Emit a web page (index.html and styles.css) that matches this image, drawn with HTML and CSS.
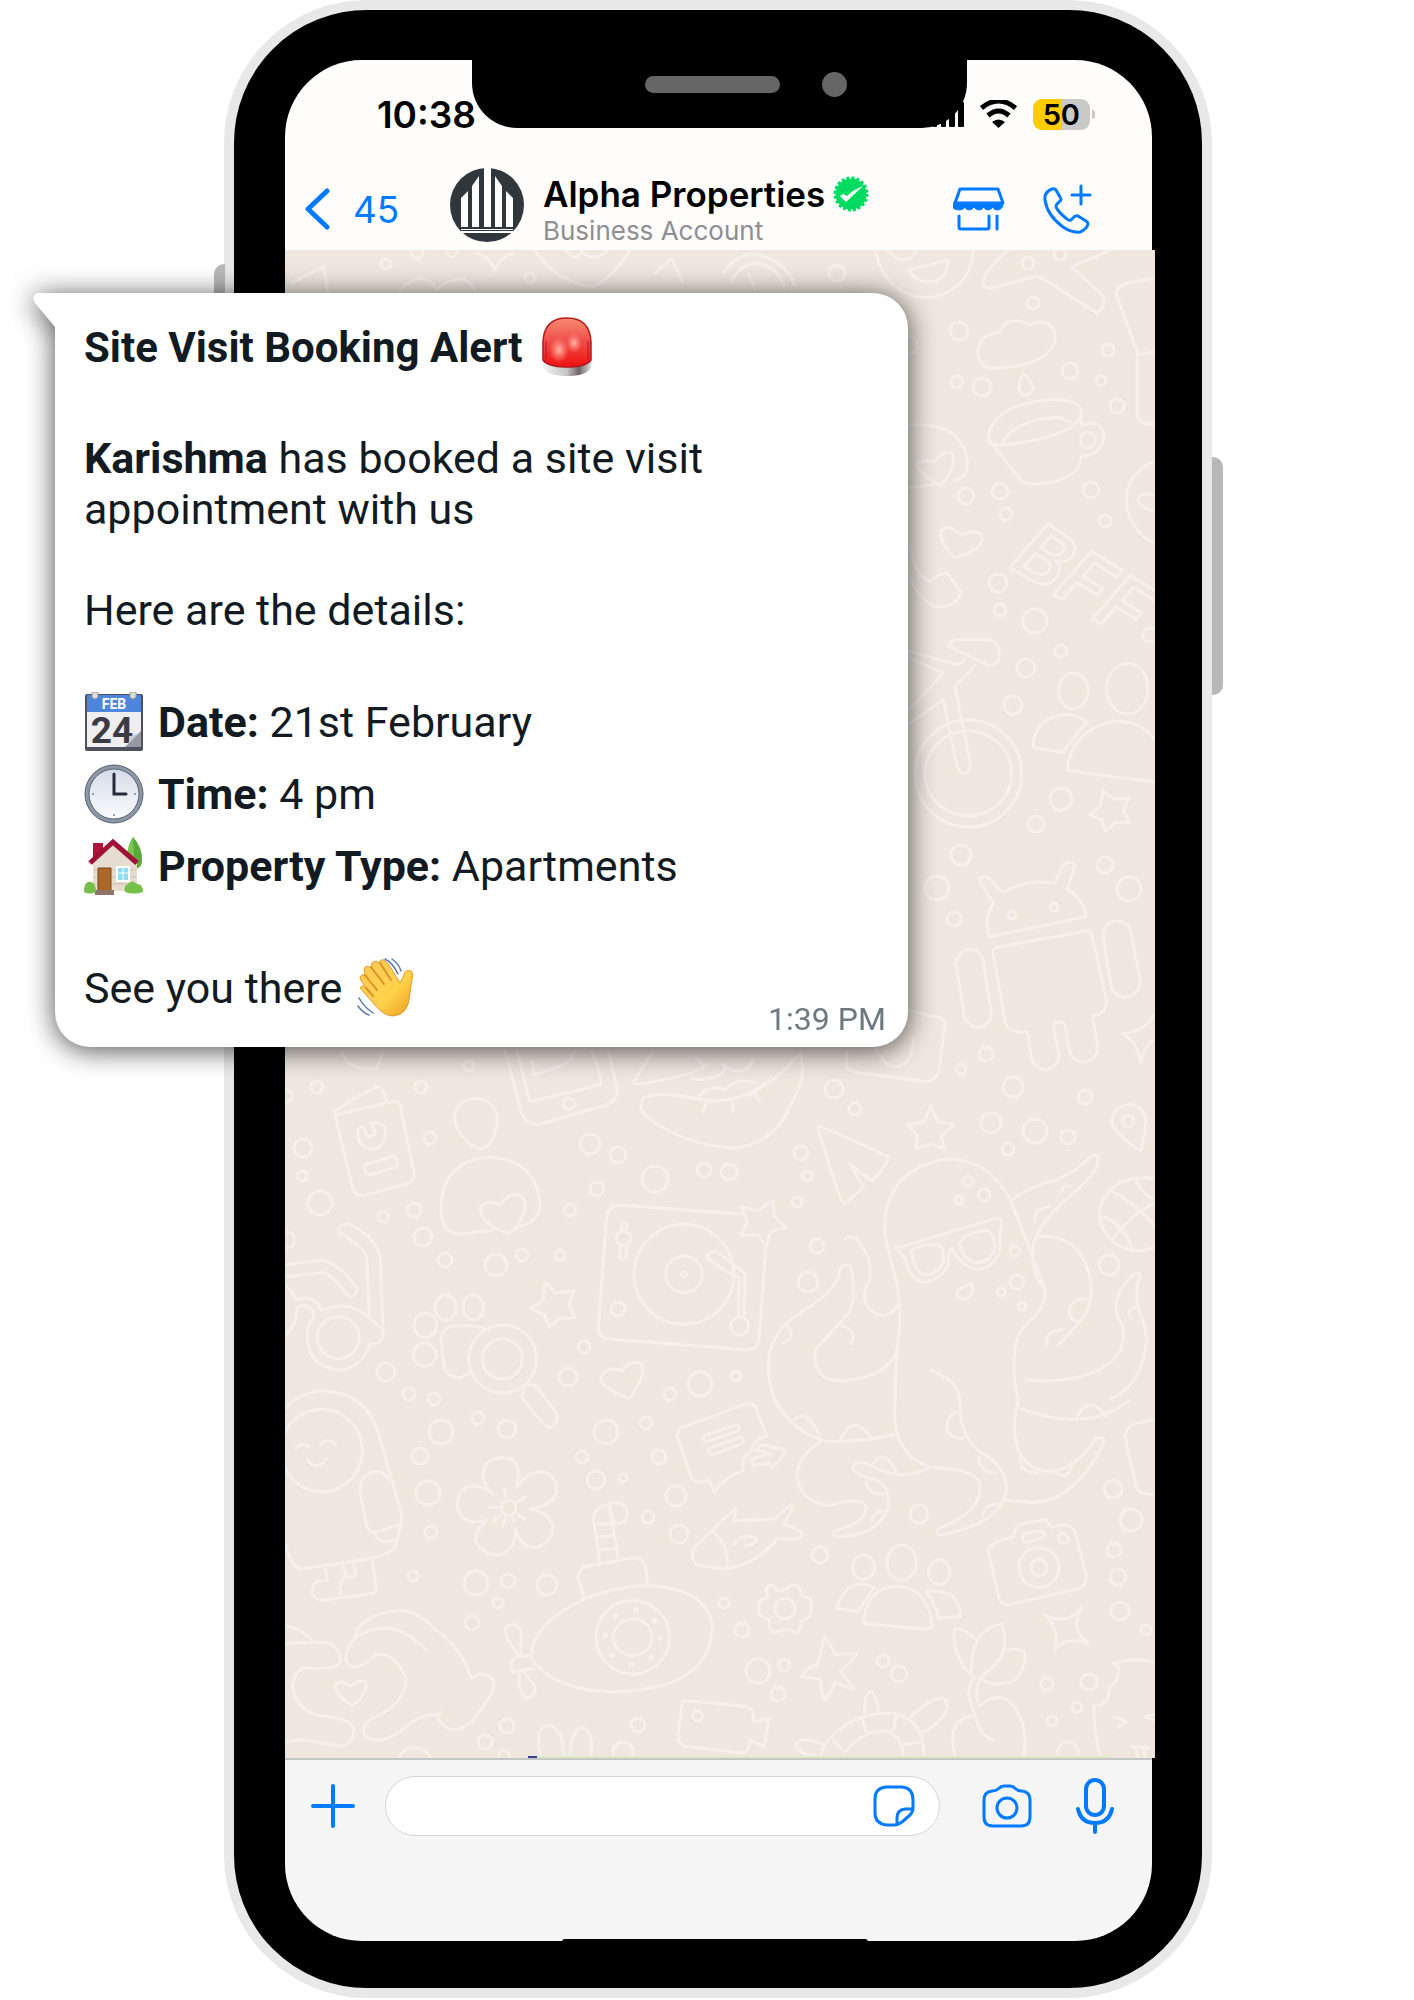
FILE: index.html
```html
<!DOCTYPE html>
<html lang="en">
<head>
    <meta charset="UTF-8">
    <meta name="viewport" content="width=device-width, initial-scale=1.0">
    <title>Site Visit Booking Alert</title>
    <link rel="stylesheet" href="styles.css">
</head>
<body>

    <div class="stage">
        <div class="phone">
            <span class="side-button side-left"></span>
            <span class="side-button side-right"></span>

            <div class="notch">
                <span class="speaker"></span>
                <span class="lens"></span>
            </div>

            <header class="top">
                <div class="status">
                    <span class="clock">10:38</span>
                    <div class="status-icons">
                        <svg width="32" height="28" viewBox="0 0 32 28"><path d="M2 21h2v5H2zM10 16h3v10h-3zM18 10h4v16h-4zM27 3h4v23h-4z" stroke="#000" stroke-width="2" stroke-linejoin="round"/></svg>
                        <svg class="wifi" width="37" height="28" viewBox="0 0 37 28"><path d="M1.500 8Q18.500-6 35.500 8M8 15.500Q18.500 6.500 29 15.500" fill="none" stroke="#000" stroke-width="5"/><path d="M12 22Q18.500 17 25 22L18.500 28z"/></svg>
                        <span class="battery">50</span>
                    </div>
                </div>
                <nav class="nav">
                    <a class="back" href="#">
                        <svg width="25" height="42" viewBox="0 0 25 42"><path d="M22 3L3 21l19 18" fill="none" stroke="#007aff" stroke-width="5" stroke-linecap="round" stroke-linejoin="round"/></svg>
                        45
                    </a>
                    <svg class="avatar" viewBox="0 0 74 74">
                        <circle cx="37" cy="37" r="37" fill="#30363a"/>
                        <path fill="#fff" d="M34 0h7v59h-7zM22 18l7-10v51h-7zM45 8l7 10v41h-7zM11 30l7-7v36h-7zM56 23l7 7v29h-7zM11 61h52v1H11zM11 63h52v2H11z"/>
                    </svg>
                    <div class="contact">
                        <div class="contact-name">Alpha Properties
                            <svg width="36" height="36" viewBox="0 0 36 36"><circle cx="18" cy="18" r="15.500" fill="#00dc61"/><circle cx="18" cy="18" r="16" fill="none" stroke="#00dc61" stroke-width="3" stroke-dasharray="2.900 2.126"/><path d="M7 20l6 6L30 10Q20 14 14 20l-4-2z" fill="#fff"/></svg>
                        </div>
                        <div class="contact-type">Business Account</div>
                    </div>
                    <div class="nav-actions">
                        <button type="button" aria-label="Catalogue">
                            <svg width="52" height="44" viewBox="0 0 52 44" fill="none" stroke="#007aff" stroke-width="3" stroke-linejoin="round" stroke-linecap="round"><path d="M7 2h38l5 14H2z"/><path d="M2 16h48q0 7-6 7-3 0-4-3-2 3-5 3t-4-3q-2 3-5 3t-5-3q-2 3-5 3t-4-3q-2 3-5 3-9 0-9-7z" fill="#007aff" stroke-width="1"/><path d="M6 29v11q0 2 2 2h26q2 0 2-2V29M44 29v13"/></svg>
                        </button>
                        <button type="button" aria-label="Call">
                            <svg width="49" height="50" viewBox="0 0 49 50" fill="none" stroke="#007aff" stroke-width="3" stroke-linejoin="round" stroke-linecap="round"><path d="M9 5Q1 8 2 16q2 15 18 27 9 6 17 5 7-3 8-8 0-2-2-3l-8-5q-3-1-5 2l-2 2q-2 1-4-1Q16 29 13 23q0-2 1-3l3-3q2-1 0-4l-4-7q-1-2-4-1zM38 2v18M29 11h18"/></svg>
                        </button>
                    </div>
                </nav>
            </header>

            <main class="chat">
                <svg class="doodles" viewBox="285 250 870 1508" preserveAspectRatio="xMinYMin slice" aria-hidden="true">
                    <g id="rings"></g>

                    <!-- top edge -->
                    <g transform="translate(200 0) scale(.3333)">
                        <path d="M270 850L370 800L385 880M595 880Q620 840 660 835Q700 840 710 870Q740 835 790 837Q820 850 830 880M825 760Q870 765 885 815Q900 765 945 760M1005 750Q1070 850 1180 860Q1240 830 1290 750M1095 750Q1130 790 1145 755Q1180 790 1225 750M1360 825L1415 775L1450 850"/>
                    </g>
                    <g transform="translate(720 0) scale(.3333)">
                        <path d="M465 750Q500 890 620 893Q750 880 760 750M565 810L685 780Q680 850 620 845Q580 840 565 810M500 750Q560 810 590 750M10 820Q50 760 105 762Q200 780 225 860M30 850Q60 790 110 790Q180 800 195 870M85 820L105 870"/>
                    </g>

                    <!-- plane, cloud, cup, bicycle, friends -->
                    <g transform="translate(900 240) scale(.3333 .4464)">
                        <path d="M330 20Q245 70 250 100Q260 110 280 107L415 80Q500 120 590 163Q620 150 610 125L515 60L640 20M765 85L680 97Q645 105 650 125L715 257L765 250M712 257V390Q715 415 765 412"/>
                        <path d="M298 208Q235 210 233 255Q240 290 290 287Q460 280 467 215Q450 170 388 190Q320 165 298 208ZM370 298Q405 325 400 335Q385 350 370 347Q345 335 370 298Z"/>
                        <path d="M265 440Q280 365 470 357Q540 360 545 385Q540 440 300 460L275 455Q262 450 265 440ZM275 455L365 540Q390 550 440 545Q540 530 540 495L545 485Q610 480 612 435Q600 400 545 415L543 385M305 455Q350 400 480 397L515 410"/>
                        <ellipse cx="563" cy="448" rx="22" ry="18"/>
                        <path d="M25 415Q190 405 203 500Q200 535 160 538M25 555L100 548M120 550Q50 520 52 500Q70 490 100 498Q150 460 160 485Q165 520 120 550ZM165 712Q120 680 122 655Q140 630 185 662Q240 640 247 672Q240 695 165 712ZM30 680Q40 750 90 765Q130 740 145 750L185 790Q160 825 110 822Q60 810 25 750"/>
                        <path d="M765 495Q680 520 680 585Q685 650 765 680M765 570Q720 565 712 580Q720 600 765 608"/>
                        <path d="M25 920L165 950Q190 950 195 938M145 910Q150 895 180 895L270 895Q300 905 298 930Q295 955 265 953L145 910M230 950L165 1000L212 1175Q205 1195 190 1195Q175 1190 170 1175L130 1030L25 1085M25 935L130 970L25 1055"/>
                        <ellipse cx="205" cy="1195" rx="160" ry="120"/>
                        <ellipse cx="205" cy="1195" rx="130" ry="95"/>
                        <ellipse cx="520" cy="1010" rx="45" ry="40"/>
                        <ellipse cx="682" cy="1005" rx="62" ry="57"/>
                        <path d="M398 1130Q410 1065 510 1062L562 1078L487 1148L405 1138ZM765 1120Q720 1075 640 1078Q510 1100 503 1188L640 1203L765 1213"/>
                        <path d="M610 1235L640 1252L687 1250L670 1277L688 1305L645 1305L617 1325L605 1298L568 1288L600 1270Z"/>
                    </g>
                    <text class="bff" transform="translate(1008 566) rotate(32)">BFF</text>

                    <!-- robot, octopus -->
                    <g transform="translate(560 850) scale(.421 .3333)">
                        <path d="M1020 260L1250 200Q1245 150 1205 118L1222 50Q1215 25 1195 45L1175 100Q1110 85 1052 128L1020 85Q1000 70 997 95L1030 160Q1005 200 1020 260Z"/>
                        <path d="M1028 305Q1030 292 1045 290L1255 242Q1263 250 1265 265L1298 450Q1300 490 1265 498L1278 600Q1270 635 1240 637Q1215 630 1210 600L1198 520Q1185 510 1172 525L1186 620Q1180 655 1150 660Q1128 655 1120 625L1110 545Q1065 550 1058 520Z"/>
                        <path d="M940 340Q945 300 975 298Q1000 305 1005 330L1025 490Q1022 530 990 533Q965 528 960 495ZM1290 260Q1292 215 1320 212Q1350 215 1356 245L1378 390Q1375 440 1340 442Q1310 435 1308 400Z"/>
                        <path d="M680 600L680 650Q690 668 710 668L870 695Q895 690 900 660L915 520Q910 500 880 498L825 480M750 595Q770 650 800 650Q840 640 840 560"/>
                        <path d="M880 768L897 815L935 825L905 860L915 897L880 882L845 895L848 855L827 825L865 815ZM1380 903Q1390 850 1392 810Q1385 765 1350 763Q1315 770 1310 815Q1315 850 1380 903ZM612 830Q620 825 780 920Q785 935 740 993Q720 975 688 940Q700 970 722 1012L675 1062Q665 1060 612 830Z"/>
                        <path d="M1410 490Q1400 540 1335 552Q1370 570 1380 640Q1385 590 1410 570"/>
                        <path d="M800 1500Q815 1400 800 1300L772 1160Q765 1060 810 990Q870 925 935 928Q1020 935 1070 1050Q1110 1180 1150 1310Q1160 1370 1110 1420Q1085 1450 1080 1500"/>
                        <path d="M798 1195L1040 1103Q1055 1110 1045 1145L1045 1200Q1030 1260 985 1257Q950 1245 930 1195Q922 1200 922 1245Q905 1290 865 1298Q830 1290 820 1225ZM835 1200Q860 1180 900 1185Q915 1200 910 1240Q895 1275 865 1275Q838 1260 835 1200ZM950 1180Q960 1145 1015 1142Q1035 1150 1032 1200Q1020 1240 985 1238Q955 1225 950 1180ZM980 1300Q985 1340 958 1348Q935 1335 948 1318Z"/>
                        <path d="M1070 1055Q1110 1010 1180 990Q1230 960 1265 915Q1285 915 1275 950Q1260 990 1200 1050Q1130 1130 1122 1200Q1120 1270 1145 1310M1130 1160Q1200 1150 1235 1210Q1280 1300 1250 1390Q1220 1440 1180 1490M1390 1500Q1400 1460 1380 1400Q1360 1340 1378 1275Q1370 1260 1350 1290Q1310 1340 1325 1400Q1350 1450 1330 1500"/>
                        <path d="M500 1500Q515 1430 580 1380Q660 1320 665 1260Q675 1235 690 1250Q705 1330 690 1380Q660 1430 605 1500M675 1170Q690 1150 710 1175Q745 1230 735 1290Q700 1370 765 1398Q800 1390 805 1350"/>
                        <path d="M1130 1115Q1120 1075 1165 1070M1190 1030Q1195 1000 1215 1010M1250 1345Q1200 1350 1212 1400Q1220 1415 1235 1415M540 1425Q565 1470 525 1480M665 1425Q710 1440 690 1485M1195 1440Q1150 1440 1155 1490M1370 1370Q1340 1380 1360 1410"/>
                        <path d="M1414 985Q1300 970 1280 1090Q1290 1190 1370 1203Q1400 1200 1414 1190M1302 1018Q1360 1050 1414 1130M1368 990Q1380 1030 1414 1050M1285 1098Q1340 1120 1360 1200M1312 1170Q1350 1100 1410 1060"/>
                        <path d="M400 897Q510 885 545 770Q590 680 570 610Q520 690 440 740M430 1070L470 1083L508 1050L508 1098L537 1133L500 1145L490 1190L470 1155L430 1155L445 1115Z"/>
                    </g>
                    <path d="M770 1350Q765 1375 775 1400M815 1350Q812 1390 860 1378Q890 1372 897 1350Q895 1375 895 1400M1015 1350Q1012 1375 1018 1400M960 1400Q958 1380 930 1370M1121 1350Q1100 1385 1025 1380M1145 1350Q1140 1385 1110 1400"/>

                    <!-- passport, turntable, magnifier -->
                    <g transform="translate(270 1050) scale(.3333)">
                        <path d="M705 0L755 190Q775 230 810 222L1010 165Q1045 150 1040 110L1015 0M740 0L780 155L990 105Q1000 95 965 0M788 30L792 75L850 55Q900 45 915 0M215 0Q225 60 320 58L340 0"/>
                        <circle cx="897" cy="161" r="17"/>
                        <path d="M1150 0L1090 100Q1100 110 1260 70Q1330 40 1300 45L1275 20M1390 295Q1240 285 1130 200Q1100 170 1120 145Q1160 120 1300 150Q1400 165 1500 90M1285 145Q1310 100 1365 120Q1400 80 1460 100M1310 155L1298 190M1388 152V190M1452 120L1470 158M1262 80Q1280 100 1350 75Q1370 60 1360 45Q1420 90 1455 25"/>
                        <path d="M190 190Q195 175 320 110Q340 108 350 155M195 195L375 153Q388 153 392 175L433 370Q433 395 410 402L280 437Q255 437 248 415ZM285 345L370 318Q388 330 380 350L300 375Q280 370 285 345ZM302 220Q350 210 346 255Q340 300 300 297Q258 285 264 240Q275 220 285 240Q290 265 305 258Q325 250 302 220Z"/>
                        <path d="M553 210Q555 150 615 145Q680 150 681 210Q675 290 630 297Q570 275 553 210ZM670 540L580 552Q520 555 513 490Q510 330 660 322Q800 330 810 460Q810 520 735 533M710 550Q630 520 630 475Q650 445 692 465Q720 420 755 440Q780 470 740 530Q725 550 710 550Z"/>
                        <path d="M1420 493L1045 465Q1012 470 1010 500L985 830Q985 865 1020 867L1435 900Q1465 895 1467 870L1488 590"/>
                        <circle cx="1242" cy="673" r="150"/><circle cx="1242" cy="673" r="55"/><circle cx="1242" cy="673" r="8"/>
                        <circle cx="1409" cy="828" r="27"/><circle cx="1061" cy="565" r="22"/><circle cx="1044" cy="777" r="21"/>
                        <path d="M1422 800L1425 670L1350 610Q1320 595 1310 625L1355 655L1408 685L1405 800M1055 543V520Q1062 510 1070 520V543M1052 588L1048 620Q1056 635 1068 620L1070 588"/>
                        <path d="M1078 1047Q990 1010 993 985Q1005 945 1055 963Q1085 925 1115 943Q1130 975 1078 1047ZM822 700Q832 693 855 730L912 722L897 765L915 803L868 805L838 833L825 795L783 775L820 750Z"/>
                        <ellipse cx="527" cy="773" rx="31" ry="38"/><ellipse cx="610" cy="772" rx="31" ry="38"/><ellipse cx="466" cy="826" rx="34" ry="37"/><ellipse cx="464" cy="914" rx="34" ry="35"/>
                        <path d="M645 835Q620 825 545 828Q515 835 513 870L520 940Q530 985 570 983L605 967M765 1005Q790 1000 800 1010L860 1090Q870 1120 840 1132Q820 1130 755 1040Z"/>
                        <circle cx="698" cy="927" r="102"/><circle cx="697" cy="927" r="60"/><circle cx="205" cy="863" r="63"/>
                        <path d="M45 645L150 630Q200 630 262 715Q255 745 235 738Q180 665 150 668L45 682M298 800L290 620Q280 590 205 545Q205 520 235 523Q310 550 330 620L340 850M45 705Q60 715 80 750Q130 730 155 782Q240 745 300 805L338 840Q345 880 300 883Q270 960 205 960Q110 950 112 850Q115 820 135 795Q110 750 80 775Q85 820 45 858"/>
                        <path d="M45 1075Q100 1020 165 1023Q290 1030 325 1150"/>
                    </g>

                    <!-- eskimo, flower, submarine, hands -->
                    <g transform="translate(270 1400) scale(.3333 .3827)">
                        <ellipse cx="155" cy="132" rx="122" ry="108"/>
                        <path d="M325 85L395 300Q395 325 380 370Q380 400 300 415L90 442Q60 430 47 375M355 210Q350 190 320 187Q270 190 270 240L290 330Q300 350 320 345L390 325M315 350Q325 372 350 370L380 368M165 440L172 470L140 475Q120 490 128 510Q140 525 160 523L310 505Q320 500 318 480L305 415M218 430L230 460Q200 480 215 510M250 425L258 460L225 465M75 130Q95 105 122 125M150 120Q175 90 200 120M110 155Q140 190 172 150"/>
                        <path d="M740 230Q760 150 700 150Q640 150 640 195Q640 220 670 245Q620 215 585 230Q560 245 562 280Q575 330 650 315Q610 345 617 370Q640 405 690 405Q740 390 735 335Q750 390 800 385Q850 370 848 330Q840 295 780 285Q850 275 860 240Q860 190 810 187Q770 190 740 230ZM700 230L708 255M655 280L690 280M668 318L695 298M695 332L708 305M735 320L725 303M768 315L740 297M770 252L735 270"/>
                        <ellipse cx="716" cy="282" rx="22" ry="20"/>
                        <path d="M945 520Q1040 485 1140 485Q1310 495 1328 590Q1325 700 1200 740Q1080 770 980 760Q830 745 783 670Q790 580 945 520ZM945 520L923 465Q925 440 950 435L1090 412Q1120 415 1125 430L1135 485M990 425L970 310Q975 275 1030 270Q1070 265 1073 300Q1065 325 1035 322L1017 278L1045 412M975 325L1035 322M980 358L1035 355M985 392L1040 388M745 665Q700 620 708 595Q730 575 752 600Q758 630 750 665M783 665L735 672Q715 690 730 710L795 702M750 710Q740 760 770 780Q800 770 795 750L760 708"/>
                        <ellipse cx="1088" cy="620" rx="110" ry="96"/><ellipse cx="1088" cy="620" rx="58" ry="48"/>
                        <ellipse cx="1088" cy="620" rx="82" ry="72" stroke-dasharray="1 21" stroke-width="5" stroke-linecap="round"/>
                        <path d="M45 590Q100 600 135 635M45 638Q100 630 180 635Q220 660 207 690Q195 705 100 700Q60 720 70 760Q90 815 150 825Q240 830 252 860Q250 900 210 905L100 887L45 893M255 620Q270 560 390 550Q440 550 490 595Q570 640 605 728Q640 700 672 735Q675 760 640 800Q590 870 540 860Q510 850 500 822L515 815M500 822Q450 820 400 860Q320 910 285 875Q270 850 310 832Q410 790 408 730Q380 660 320 665Q250 720 227 680Q225 650 260 618Q370 560 470 655M247 800Q190 765 197 742Q215 730 242 748Q275 725 288 740Q295 765 247 800Z"/>
                        <path d="M812 930Q790 850 840 850Q880 860 880 930M900 930Q905 855 940 857Q975 870 962 930M385 935Q430 880 485 935M1240 785L1430 800Q1455 810 1450 840L1497 832L1483 905L1440 890Q1435 925 1410 922L1245 905Q1220 895 1225 875L1235 800Z"/>
                        <ellipse cx="1283" cy="825" rx="15" ry="13"/>
                        <path d="M1265 205L1222 95Q1220 80 1240 70L1435 8Q1455 8 1462 30L1490 95Q1450 100 1447 130Q1410 150 1420 185Q1370 195 1333 240L1318 210Q1280 220 1265 205ZM1305 92L1400 65Q1415 70 1405 80L1310 110Q1295 105 1305 92ZM1320 125L1412 97Q1428 105 1415 115L1325 143Q1308 135 1320 125Z"/>
                        <path d="M1515 310L1390 315L1398 285Q1390 285 1270 390Q1260 415 1280 430Q1330 440 1370 440M1328 345Q1380 380 1370 440"/>
                    </g>

                    <!-- fish, people, camera, lotus, turtle -->
                    <g transform="translate(720 1400) scale(.3333 .3827)">
                        <path d="M95 155L150 140L110 130Q115 115 130 118L195 130Q195 145 155 178L145 165L100 170ZM40 317L165 310L215 272Q225 280 190 325Q250 340 248 355Q220 370 175 360Q110 430 20 440M40 380Q70 340 110 365Q95 385 70 380"/>
                        <path d="M145 485Q165 480 170 498Q195 500 215 482Q240 480 243 510L272 520Q278 545 268 568L243 578Q245 600 230 608Q215 600 195 600Q175 605 160 607Q145 600 148 575L120 563Q112 545 122 522L145 515Q135 500 145 485Z"/>
                        <ellipse cx="195" cy="545" rx="30" ry="26"/>
                        <path d="M313 620Q320 620 345 665L410 662Q405 675 360 708L403 755Q385 755 345 738Q330 770 315 782Q305 770 300 730L243 722Q250 705 293 690Z"/>
                        <ellipse cx="545" cy="425" rx="44" ry="46"/><ellipse cx="431" cy="437" rx="33" ry="32"/><ellipse cx="658" cy="450" rx="32" ry="32"/>
                        <path d="M430 580Q440 490 530 487Q625 490 637 590Q630 600 600 598L440 585ZM350 545Q370 480 430 480L462 490L415 552ZM618 500Q720 490 722 565L655 570Q645 530 618 500Z"/>
                        <path d="M805 395Q810 370 880 358Q885 330 900 325L975 312L995 333Q1050 315 1065 345L1100 460Q1100 485 1075 493L865 535Q840 535 835 510ZM908 362Q905 350 925 347L965 342Q980 350 970 358L920 373Q908 373 908 362Z"/>
                        <ellipse cx="957" cy="438" rx="60" ry="52"/><ellipse cx="957" cy="438" rx="24" ry="22"/><ellipse cx="1030" cy="362" rx="14" ry="13"/>
                        <path d="M975 562Q1040 590 1085 543Q1045 600 1105 635Q1035 615 1002 655Q1025 605 975 562Z"/>
                        <path d="M755 720Q690 660 705 597Q740 600 770 628Q800 590 845 585Q860 620 850 655Q900 645 915 660Q915 740 840 742Q790 740 780 725M755 720Q750 660 775 625M850 655Q840 690 785 722M745 770Q750 735 765 722M780 725Q760 770 780 800M745 770L765 825Q700 830 697 885L705 935M765 825Q780 880 825 890M780 800Q830 760 870 790Q925 830 912 935"/>
                        <path d="M300 935Q310 900 330 885Q400 815 520 818Q620 840 610 935M375 920Q430 860 500 865Q550 880 550 935M340 890L375 920M425 830L442 875M530 820L520 865M550 900L612 893M435 820Q430 765 455 762Q475 780 475 815M570 830Q630 780 665 778Q695 790 670 825Q640 860 603 868M310 900Q240 875 227 900Q230 925 290 930"/>
                        <path d="M1140 935Q1120 850 1122 800Q1170 800 1168 750Q1195 740 1195 710Q1200 695 1180 688Q1250 670 1305 685M1185 828L1220 842L1190 858M1305 822L1275 828L1305 837M1228 905L1290 910M1245 905L1255 935M1270 908L1275 935M1305 50L1235 65Q1210 80 1218 110L1250 230Q1260 250 1305 245"/>
                        <path d="M165 0Q210 80 320 108Q430 110 525 90M310 103Q225 150 232 205Q245 270 330 275Q430 250 438 280Q440 320 350 340Q330 350 350 355Q470 360 505 280Q510 210 450 205Q390 190 400 170Q420 155 460 175Q550 215 630 175M525 0Q510 140 630 175Q770 180 780 220Q790 290 660 335Q640 350 665 353Q850 320 860 230Q855 170 780 135Q715 90 720 0M895 0Q870 80 900 140Q950 210 1040 175Q1090 150 1130 100Q1160 95 1150 115Q1060 270 930 268L855 262M895 20Q1100 90 1230 0"/>
                        <path d="M222 52Q260 20 300 95M360 105Q400 30 452 98M710 30Q670 50 685 85Q710 105 735 98M778 145Q775 190 830 190M900 148Q900 190 950 190L965 182M1005 183Q1040 220 1058 165M1070 45Q1110-20 1160 45M455 175Q490 115 530 190M440 210Q440 250 495 245M455 320Q460 290 490 290M788 305Q795 265 845 275"/>
                    </g>
                </svg>

                <article class="bubble">
                    <svg class="tail" width="40" height="34" viewBox="0 0 40 34"><path d="M40 0H5Q-2 2 2 10L22 34h18z" fill="#fff"/></svg>
                    <h1 class="emoji-row">
                        Site Visit Booking Alert
                        <svg class="emoji" viewBox="0 0 60 60">
                            <defs>
                                <linearGradient id="dome" x1="0" y1="0" x2="0" y2="1"><stop offset="0" stop-color="#f98a72"/><stop offset=".45" stop-color="#f0504c"/><stop offset="1" stop-color="#f01010"/></linearGradient>
                                <linearGradient id="base"><stop offset="0" stop-color="#f4f4f4"/><stop offset=".5" stop-color="#c4c4c4"/><stop offset=".75" stop-color="#6f6467"/><stop offset="1" stop-color="#e0e0e0"/></linearGradient>
                                <radialGradient id="glow"><stop offset="0" stop-color="#ffb8a8"/><stop offset="1" stop-color="#ff8f80" stop-opacity="0"/></radialGradient>
                            </defs>
                            <path d="M6 42v9q5 8 24 8t24-8v-9z" fill="url(#base)"/>
                            <path d="M6 43V25Q7 1 30 1t24 24v18q-5 7-24 7T6 43z" fill="url(#dome)" stroke="#b3191c" stroke-width="1.500"/>
                            <path d="M9 42V24M51 42V24" stroke="#b3191c" stroke-width="2" opacity=".5"/>
                            <ellipse cx="22" cy="33" rx="10" ry="13" fill="url(#glow)"/>
                            <ellipse cx="37" cy="26" rx="8" ry="10" fill="url(#glow)"/>
                        </svg>
                    </h1>
                    <p><b>Karishma</b> has booked a site visit appointment with us</p>
                    <p>Here are the details:</p>
                    <ul class="details">
                        <li class="emoji-row">
                            <svg class="emoji" viewBox="0 0 60 60">
                                <rect x="1" y="2" width="58" height="57" rx="2" fill="#4e505c"/>
                                <rect x="3" y="19" width="54" height="36" fill="#eeeef1"/>
                                <path d="M3 3h54v17H3z" fill="#4f86dd"/>
                                <path d="M8 0h6v5q-3 4-6 0zM46 0h6v5q-3 4-6 0z" fill="#dcdcd6" stroke="#999" stroke-width="1"/>
                                <text x="30" y="17" class="cal-month">FEB</text>
                                <text x="28" y="51" class="cal-day">24</text>
                                <path d="M41 55q5-3 4-11 7 0 12-5z" fill="#c9c9ce"/><path d="M41 55L57 39v16z" fill="#9799a2"/>
                            </svg>
                            <span><b>Date:</b> 21st February</span>
                        </li>
                        <li class="emoji-row">
                            <svg class="emoji" viewBox="0 0 60 60">
                                <defs><linearGradient id="face" x1="0" y1="0" x2="0" y2="1"><stop offset="0" stop-color="#d5dbe8"/><stop offset="1" stop-color="#fafbff"/></linearGradient></defs>
                                <circle cx="30" cy="30" r="29" fill="#8b97a5" stroke="#59626e" stroke-width="1"/>
                                <circle cx="30" cy="30" r="25" fill="url(#face)" stroke="#5b6573" stroke-width="1"/>
                                <path d="M30 10v20h12" fill="none" stroke="#252b3a" stroke-width="3" stroke-linecap="round"/>
                                <path d="M8 30h2M50 30h2M30 50v2" stroke="#98a0ab" stroke-width="2"/>
                            </svg>
                            <span><b>Time:</b> 4 pm</span>
                        </li>
                        <li class="emoji-row">
                            <svg class="emoji" viewBox="0 0 60 60">
                                <path d="M49 1q9 10 9 23 0 8-7 9-8-2-8-11Q43 9 49 1z" fill="#7cc653"/>
                                <path d="M49 1q9 10 9 23 0 8-7 9z" fill="#5da83c"/>
                                <path d="M9 7h10v13L9 28z" fill="#b01539"/>
                                <path d="M9 26L29 7l24 20v28H9z" fill="#e6dccf"/>
                                <path d="M10 34h42M10 41h42M10 48h42" stroke="#cfc2b3" stroke-width="1"/>
                                <path d="M6 27L29 6l24 21" fill="none" stroke="#a01238" stroke-width="5"/>
                                <path d="M14 32h13v23H14z" fill="#a9672a" stroke="#7c471a" stroke-width="1"/>
                                <path d="M33 31h12v14H33z" fill="#8edcf3" stroke="#fff" stroke-width="2"/>
                                <path d="M39 31v14M33 37h12" stroke="#fff" stroke-width="1"/>
                                <path d="M11 54h19v5H11z" fill="#8d7464"/>
                                <path d="M0 56q0-12 7-10 5 1 5 10-6 3-12 0zM41 56q-2-6 3-8 4-5 9 0 6 0 6 8-9 3-18 0z" fill="#76bf4b"/>
                            </svg>
                            <span><b>Property Type:</b> Apartments</span>
                        </li>
                    </ul>
                    <div class="closing">
                        <p class="emoji-row">
                            See you there
                            <svg class="emoji" viewBox="0 0 60 60">
                                <defs><linearGradient id="skin" x1="0" y1="0" x2="1" y2="1"><stop offset="0" stop-color="#fcc95b"/><stop offset=".6" stop-color="#ffd24a"/><stop offset="1" stop-color="#e99a1c"/></linearGradient></defs>
                                <path d="M4 30q2-4 6 0L4 21q0-5 5-4L8 11q2-5 7-1l1-5q4-4 8 1-1-5 4-4 4 3 7 8l9 15 4-8q1-6 7-4 3 2 1 8-1 6-2 14-1 22-17 23-9 0-18-11z" fill="url(#skin)" stroke="#e39a28" stroke-width="1"/>
                                <path d="M9 17l12 15M15 9l13 17M24 5l11 17M10 30l7 8" fill="none" stroke="#dc9224" stroke-width="2" stroke-linecap="round"/>
                                <path d="M29 1q8 4 13 15M36 1q7 5 9 12M3 40q5 9 14 15M2 48q5 7 11 9" fill="none" stroke="#5b78b0" stroke-width="1.500" stroke-linecap="round"/>
                            </svg>
                        </p>
                        <time class="sent">1:39 PM</time>
                    </div>
                </article>
                <span class="edge"></span>
            </main>

            <form class="composer">
                <button type="button" aria-label="Attach">
                    <svg width="44" height="44" viewBox="0 0 44 44"><path d="M22 2v40M2 22h40" stroke="#007aff" stroke-width="4" stroke-linecap="round"/></svg>
                </button>
                <div class="field">
                    <input type="text" aria-label="Message">
                    <button type="button" class="sticker" aria-label="Stickers">
                        <svg width="42" height="42" viewBox="0 0 42 42" fill="none" stroke="#007aff" stroke-width="3" stroke-linejoin="round"><path d="M13 2h16q11 1 11 13v8q0 4-3 7l-8 7q-4 3-8 3h-7Q2 39 2 28V14Q2 3 13 2zM24 39v-6q0-8 8-9h8"/></svg>
                    </button>
                </div>
                <button type="button" class="camera" aria-label="Camera">
                    <svg width="50" height="44" viewBox="0 0 50 44" fill="none" stroke="#007aff" stroke-width="3" stroke-linejoin="round"><path d="M10 7q4 0 6-2 3-3 6-3h6q3 0 6 3 2 2 6 2 8 1 8 9v17q0 9-9 9H11q-9 0-9-9V16q0-8 8-9z"/><circle cx="25" cy="24" r="10"/></svg>
                </button>
                <button type="button" aria-label="Record">
                    <svg width="38" height="56" viewBox="0 0 38 56" fill="none" stroke="#007aff" stroke-width="4" stroke-linecap="round"><rect x="10" y="2" width="18" height="35" rx="9"/><path d="M2 31q3 14 17 14t17-14M19 45v9"/></svg>
                </button>
            </form>
            <span class="chin"></span>
        </div>
    </div>

    <script>
        // x, y, radius of the small bubbles scattered over the wallpaper
        const rings = [
            [317,1087,6],[421,1087,6],[430,1138,6],[303,1148,9],[302,1176,5],[320,1203,12],[383,1217,5],[414,1210,7],[423,1237,9],[445,1260,7],
            [496,1265,11],[522,1255,6],[560,1255,5],[570,1210,6],[597,1189,7],[590,1144,10],[618,1155,8],[655,1179,13],[704,1170,7],[729,1172,8],
            [584,1347,6],[568,1377,9],[386,1372,9],[409,1394,6],[434,1399,6],[441,1432,12],[478,1418,6],[507,1429,9],[606,1432,12],[646,1423,6],
            [670,1394,6],[700,1384,12],[736,1376,5],[469,1066,5],[287,1096,6],[287,1240,8],[420,1456,8],[428,1493,12],[431,1532,6],[413,1576,5],
            [476,1583,12],[508,1581,7],[547,1585,10],[498,1603,5],[472,1623,7],[582,1457,6],[596,1480,9],[623,1478,4],[659,1457,7],[676,1496,10],
            [648,1517,6],[679,1534,9],[724,1603,5],[742,1630,7],[758,1671,12],[507,1726,7],[485,1742,7],[504,1755,5],[638,1725,7],[623,1752,10],
            [784,1665,6],[778,1694,7],[820,1555,8],[919,1514,9],[883,1661,6],[899,1674,8],[1113,1489,9],[1131,1520,11],[1114,1550,7],[1118,1577,8],
            [1120,1611,9],[1146,1630,5],[1047,1684,6],[1089,1682,8],[1077,1707,5],[1052,1721,5],[1068,1752,10],[959,331,9],[1033,303,6],[1070,371,8],
            [1108,350,6],[1101,381,5],[1117,406,7],[957,382,6],[982,387,9],[1028,263,6],[1060,254,6],[966,496,8],[1000,491,8],[1006,514,6],
            [1091,490,8],[1105,521,6],[998,583,9],[1000,610,6],[1035,621,12],[1061,651,6],[1026,668,9],[1013,705,9],[1061,799,11],[1036,824,8],
            [961,855,10],[937,888,12],[954,919,7],[1105,865,8],[1129,889,12],[1150,635,7],[908,345,9],[1012,915,4],[1054,907,4],[986,1054,7],
            [961,1069,5],[1013,1087,10],[1085,1097,7],[991,1123,10],[1035,1131,12],[1068,1137,7],[1008,1149,6],[834,1089,9],[855,1109,6],[801,1153,7],
            [807,1176,5],[797,1202,5],[968,1181,5],[984,1195,6],[959,1200,4],[817,1246,7],[808,1282,10],[1015,1251,5],[1017,1282,7],[1001,1292,4],
            [1022,1306,4],[1109,1265,10],[1128,1121,6],[386,264,5],[417,252,6],[452,252,5],[530,278,5],[837,273,8]
        ];
        const layer = document.getElementById('rings');
        rings.forEach(([x, y, r]) => {
            const ring = document.createElementNS('http://www.w3.org/2000/svg', 'circle');
            ring.setAttribute('cx', x);
            ring.setAttribute('cy', y);
            ring.setAttribute('r', r);
            layer.appendChild(ring);
        });
    </script>
</body>
</html>
```
FILE: styles.css
```css
* {
    box-sizing: border-box;
}

body {
    margin: 0;
    background-color: #fff;
    font-family: Inter, "Liberation Sans", sans-serif;
}

button {
    display: flex;
    padding: 0;
    border: none;
    background: none;
    cursor: pointer;
}

.stage {
    padding: 0 14.3% 0 15.84%;
}

/* phone body */
.phone {
    position: relative;
    display: flex;
    flex-direction: column;
    min-height: calc(100vh - 2px);
    padding: 50px 50px 47px 51px;
    border: 10px solid #e8e8e8;
    border-radius: 143px;
    background-color: #000;
}

.side-button {
    position: absolute;
    width: 11px;
    background-color: #b8b8b8;
}

.side-left {
    top: 254px;
    left: -20px;
    height: 238px;
    border-radius: 10px 0 0 10px;
}

.side-right {
    top: 447px;
    right: -21px;
    height: 238px;
    border-radius: 0 10px 10px 0;
}

.notch {
    position: absolute;
    z-index: 1;
    top: 49px;
    left: 238px;
    right: 235px;
    height: 69px;
    border-radius: 0 0 45px 45px;
    background-color: #000;
}

.speaker {
    position: absolute;
    top: 17px;
    left: 173px;
    width: 135px;
    height: 17px;
    border-radius: 9px;
    background-color: #666;
}

.lens {
    position: absolute;
    top: 13px;
    left: 350px;
    width: 25px;
    height: 25px;
    border-radius: 50%;
    background-color: #666;
}

/* status bar and contact */
.top {
    border-radius: 77px 77px 0 0;
    background-color: #fefdfc;
}

.status {
    display: flex;
    justify-content: space-between;
    align-items: center;
    height: 108px;
    padding: 0 62px 0 92px;
}

.clock {
    position: relative;
    z-index: 2;
    font-size: 37px;
    font-weight: 600;
}

.status-icons {
    display: flex;
    align-items: center;
    gap: 16px;
}

.battery {
    position: relative;
    width: 57px;
    height: 31px;
    border-radius: 9px;
    background: linear-gradient(90deg, #fc0 51%, #c9c9c8 51%);
    font-size: 29px;
    font-weight: 600;
    line-height: 31px;
    text-align: center;
}

.battery::after {
    content: "";
    position: absolute;
    top: 11px;
    right: -5px;
    width: 3px;
    height: 9px;
    border-radius: 0 4px 4px 0;
    background-color: #c9c9c8;
}

.nav {
    display: flex;
    align-items: center;
    height: 82px;
    padding: 0 60px 0 20px;
}

.back {
    display: flex;
    align-items: center;
    gap: 23px;
    min-width: 145px;
    color: #007aff;
    font-size: 37px;
    text-decoration: none;
}

.avatar {
    align-self: flex-start;
    width: 74px;
    height: 74px;
    margin-right: 19px;
}

.contact-name {
    display: flex;
    align-items: center;
    gap: 8px;
    font-size: 35px;
    font-weight: 600;
    line-height: 42px;
    white-space: nowrap;
}

.contact-type {
    color: #8e8e93;
    font-size: 26px;
    line-height: 31px;
}

.nav-actions {
    display: flex;
    align-items: center;
    gap: 38px;
    margin-left: auto;
}

/* conversation */
.chat {
    position: relative;
    flex: 1;
    margin-right: -3px;
    background-color: #efe7de;
}

.doodles {
    position: absolute;
    top: 0;
    left: 0;
    width: 100%;
    height: 100%;
    fill: none;
    stroke: #f6f0ea;
    stroke-width: 3px;
    stroke-linejoin: round;
}

.doodles * {
    vector-effect: non-scaling-stroke;
}

.bff {
    font-size: 78px;
    font-style: italic;
    font-weight: 600;
}

.edge {
    position: absolute;
    left: 243px;
    right: 45px;
    bottom: 0;
    height: 2px;
    border-left: 9px solid #3d3f94;
    background-color: #dcecc8;
}

.bubble {
    position: relative;
    margin: 43px 247px 0 -230px;
    padding: 18px 22px 9px 29px;
    border-radius: 35px;
    border-top-left-radius: 0;
    background-color: #fff;
    color: #121b22;
    font-family: Roboto, "Liberation Sans", sans-serif;
    font-size: 43px;
    line-height: 51px;
    filter: drop-shadow(0 3px 14px rgba(0, 0, 0, 0.7));
}

.tail {
    position: absolute;
    top: 0;
    left: -22px;
}

.bubble h1,
.bubble p,
.details {
    margin: 0 0 50px;
    padding: 0;
}

.bubble h1 {
    font-size: 42px;
}

.bubble p {
    max-width: 640px;
}

.bubble b,
.bubble h1 {
    font-weight: 700;
}

.details {
    list-style: none;
}

.emoji-row {
    display: flex;
    align-items: center;
    gap: 14px;
    height: 72px;
}

.emoji {
    flex: none;
    width: 60px;
    height: 60px;
}

.cal-month {
    fill: #fff;
    font-size: 14px;
    font-weight: 700;
    text-anchor: middle;
}

.cal-day {
    fill: #3a3b45;
    font-size: 37px;
    font-weight: 700;
    text-anchor: middle;
}

.closing {
    display: flex;
    justify-content: space-between;
    align-items: flex-end;
}

.closing p {
    margin-bottom: 14px;
}

.sent {
    color: #6c7980;
    font-size: 32px;
    line-height: 38px;
}

/* message box */
.composer {
    display: flex;
    align-items: flex-start;
    height: 183px;
    padding: 16px 38px 0 26px;
    border-top: 2px solid #c6c6c6;
    border-radius: 0 0 77px 77px;
    background-color: #f5f5f5;
}

.composer > button {
    align-items: center;
    height: 60px;
}

.field {
    position: relative;
    flex: 1;
    margin: 0 42px 0 30px;
}

.field input {
    display: block;
    width: 100%;
    height: 60px;
    padding: 0 80px 0 30px;
    border: 1px solid #d6d6d6;
    border-radius: 30px;
    background-color: #fff;
    font-family: inherit;
    font-size: 32px;
}

.sticker {
    position: absolute;
    top: 9px;
    right: 25px;
}

.camera {
    margin-right: 44px;
}

.chin {
    position: absolute;
    bottom: 46px;
    left: 328px;
    right: 334px;
    height: 3px;
    border-radius: 3px 3px 0 0;
    background-color: #000;
}
```
